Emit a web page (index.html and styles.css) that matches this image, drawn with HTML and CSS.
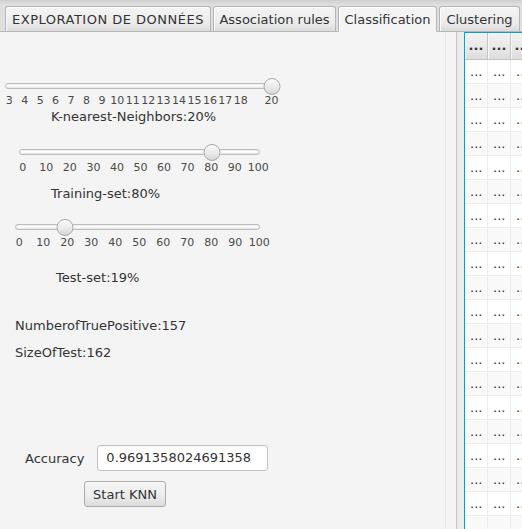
FILE: index.html
```html
<!DOCTYPE html>
<html>
<head>
<meta charset="utf-8">
<link rel="stylesheet" href="styles.css">
</head>
<body>
<div class="app">
  <div class="tabbar">
    <div class="tab tab-explore">EXPLORATION DE DONNÉES</div>
    <div class="tab tab-assoc">Association rules</div>
    <div class="tab tab-class selected">Classification</div>
    <div class="tab tab-clust">Clustering</div>
  </div>
  <div class="main">
    <div class="left">
      <div class="slider s1">
        <div class="track"></div>
        <div class="thumb" style="left:266.6px"></div>
        <div class="ticks">
          <span style="left:4.3px">3</span>
          <span style="left:19.7px">4</span>
          <span style="left:35.2px">5</span>
          <span style="left:50.6px">6</span>
          <span style="left:66px">7</span>
          <span style="left:81.5px">8</span>
          <span style="left:96.9px">9</span>
          <span style="left:112.3px">10</span>
          <span style="left:127.7px">11</span>
          <span style="left:143.2px">12</span>
          <span style="left:158.6px">13</span>
          <span style="left:174px">14</span>
          <span style="left:189.5px">15</span>
          <span style="left:204.9px">16</span>
          <span style="left:220.3px">17</span>
          <span style="left:235.7px">18</span>
          <span style="left:266.6px">20</span>
        </div>
      </div>
      <div class="caption c1">K-nearest-Neighbors:20%</div>

      <div class="slider s2">
        <div class="track"></div>
        <div class="thumb" style="left:193px"></div>
        <div class="ticks">
          <span style="left:3.7px">0</span>
          <span style="left:27.3px">10</span>
          <span style="left:50.8px">20</span>
          <span style="left:74.4px">30</span>
          <span style="left:97.9px">40</span>
          <span style="left:121.5px">50</span>
          <span style="left:145.1px">60</span>
          <span style="left:168.6px">70</span>
          <span style="left:192.2px">80</span>
          <span style="left:215.7px">90</span>
          <span style="left:239.3px">100</span>
        </div>
      </div>
      <div class="caption c2">Training-set:80%</div>

      <div class="slider s3">
        <div class="track"></div>
        <div class="thumb" style="left:49.9px"></div>
        <div class="ticks">
          <span style="left:4.3px">0</span>
          <span style="left:28.3px">10</span>
          <span style="left:52.3px">20</span>
          <span style="left:76.3px">30</span>
          <span style="left:100.3px">40</span>
          <span style="left:124.3px">50</span>
          <span style="left:148.3px">60</span>
          <span style="left:172.3px">70</span>
          <span style="left:196.3px">80</span>
          <span style="left:220.3px">90</span>
          <span style="left:244.3px">100</span>
        </div>
      </div>
      <div class="caption c3">Test-set:19%</div>

      <div class="caption c4">NumberofTruePositive:157</div>
      <div class="caption c5">SizeOfTest:162</div>

      <div class="acc-row">
        <span class="acc-label">Accuracy</span>
        <div class="field">0.9691358024691358</div>
      </div>
      <button class="btn">Start KNN</button>
    </div>
    <div class="split"></div>
    <div class="scroll">
      <div class="table">
        <div class="thead">
          <div class="th">...</div><div class="th">...</div><div class="th">...</div><div class="th">...</div>
        </div>
        <div class="tr"><div class="td">...</div><div class="td">...</div><div class="td">...</div><div class="td">...</div></div>
        <div class="tr"><div class="td">...</div><div class="td">...</div><div class="td">...</div><div class="td">...</div></div>
        <div class="tr"><div class="td">...</div><div class="td">...</div><div class="td">...</div><div class="td">...</div></div>
        <div class="tr"><div class="td">...</div><div class="td">...</div><div class="td">...</div><div class="td">...</div></div>
        <div class="tr"><div class="td">...</div><div class="td">...</div><div class="td">...</div><div class="td">...</div></div>
        <div class="tr"><div class="td">...</div><div class="td">...</div><div class="td">...</div><div class="td">...</div></div>
        <div class="tr"><div class="td">...</div><div class="td">...</div><div class="td">...</div><div class="td">...</div></div>
        <div class="tr"><div class="td">...</div><div class="td">...</div><div class="td">...</div><div class="td">...</div></div>
        <div class="tr"><div class="td">...</div><div class="td">...</div><div class="td">...</div><div class="td">...</div></div>
        <div class="tr"><div class="td">...</div><div class="td">...</div><div class="td">...</div><div class="td">...</div></div>
        <div class="tr"><div class="td">...</div><div class="td">...</div><div class="td">...</div><div class="td">...</div></div>
        <div class="tr"><div class="td">...</div><div class="td">...</div><div class="td">...</div><div class="td">...</div></div>
        <div class="tr"><div class="td">...</div><div class="td">...</div><div class="td">...</div><div class="td">...</div></div>
        <div class="tr"><div class="td">...</div><div class="td">...</div><div class="td">...</div><div class="td">...</div></div>
        <div class="tr"><div class="td">...</div><div class="td">...</div><div class="td">...</div><div class="td">...</div></div>
        <div class="tr"><div class="td">...</div><div class="td">...</div><div class="td">...</div><div class="td">...</div></div>
        <div class="tr"><div class="td">...</div><div class="td">...</div><div class="td">...</div><div class="td">...</div></div>
        <div class="tr"><div class="td">...</div><div class="td">...</div><div class="td">...</div><div class="td">...</div></div>
        <div class="tr"><div class="td">...</div><div class="td">...</div><div class="td">...</div><div class="td">...</div></div>
        <div class="tr"><div class="td">...</div><div class="td">...</div><div class="td">...</div><div class="td">...</div></div>
      </div>
    </div>
  </div>
</div>
</body>
</html>
```

FILE: styles.css
```css
* { box-sizing: border-box; }
html, body { margin: 0; padding: 0; }
body {
  width: 522px;
  height: 529px;
  overflow: hidden;
  background: #f4f4f4;
  font-family: "DejaVu Sans", sans-serif;
  font-size: 13px;
  color: #333333;
}
.app { width: 522px; height: 529px; display: flex; flex-direction: column; overflow: hidden; }

.tabbar {
  height: 32px;
  flex: none;
  display: flex;
  align-items: flex-end;
  gap: 2px;
  padding-left: 5px;
  background: linear-gradient(to bottom, #cfcfcf 0px, #dfdfdf 5px, #dfdfdf 100%);
  border-bottom: 1px solid #b8b8b8;
  white-space: nowrap;
}
.tab {
  height: 26px;
  flex: none;
  margin-bottom: -1px;
  padding: 0;
  line-height: 25px;
  text-align: center;
  overflow: hidden;
  border: 1px solid #b5b5b5;
  border-radius: 3px 3px 0 0;
  background: linear-gradient(to bottom, #f4f4f4, #ebebeb 70%, #dadada);
  box-shadow: inset 1px 1px 0 #fbfbfb;
  border-bottom: 1px solid #b8b8b8;
}
.tab-explore { width: 206px; letter-spacing: 0.5px; }
.tab-assoc { width: 123px; }
.tab-class { width: 99px; }
.tab-clust { width: 81px; }
.tab.selected {
  background: #f4f4f4;
  border-bottom-color: #f4f4f4;
  box-shadow: inset 1px 1px 0 #ffffff;
}

.main { flex: 1; display: flex; min-height: 0; }
.left {
  width: 446px;
  flex: none;
  display: flex;
  flex-direction: column;
  align-items: flex-start;
  border-right: 1px solid #e6e6e6;
}
.split { width: 10px; flex: none; }
.scroll {
  flex: 1;
  border-left: 1px solid #c6c6c6;
  padding-left: 7px;
  background: #ececec;
  overflow: hidden;
  min-width: 0;
}

.slider { position: relative; height: 30px; flex: none; }
.s1 { margin: 46px 0 0 5px; width: 274px; height: 29px; }
.s2 { margin: 19px 0 0 19px; width: 241px; }
.s3 { margin: 17px 0 0 15px; width: 245px; }
.track {
  margin-top: 5px;
  height: 6px;
  border: 1px solid #bdbdbd;
  border-radius: 3px;
  background: linear-gradient(to bottom, #e9e9e9, #ffffff 40%, #f3f3f3 70%, #e2e2e2);
}
.thumb {
  position: absolute;
  top: 0;
  width: 17px;
  height: 17px;
  transform: translateX(-50%);
  border-radius: 50%;
  border: 1px solid #a6a6a6;
  background: linear-gradient(to bottom, #fafafa, #e8e8e8 60%, #d6d6d6);
  box-shadow: inset 0 1px 0 #ffffff, 0 1px 0 rgba(255,255,255,0.7);
}
.ticks {
  position: relative;
  height: 13px;
  margin-top: 6px;
  font-size: 11px;
  line-height: 13px;
  color: #4a4a4a;
}
.s1 .ticks { margin-top: 5px; }
.ticks span { position: absolute; top: 0; transform: translateX(-50%); white-space: nowrap; }

.caption { line-height: 16px; height: 16px; white-space: nowrap; flex: none; }
.c1 { margin: 2px 0 0 51px; }
.c2 { margin: 12px 0 0 51px; }
.c3 { margin: 21px 0 0 56px; }
.c4 { margin: 32px 0 0 15px; }
.c5 { margin: 11px 0 0 15px; }

.acc-row {
  margin: 84px 0 0 25px;
  display: flex;
  align-items: center;
  gap: 13px;
  height: 26px;
  flex: none;
}
.field {
  width: 171px;
  height: 26px;
  line-height: 24px;
  padding-left: 8px;
  background: #ffffff;
  border: 1px solid #c2c2c2;
  border-radius: 3px;
  box-shadow: inset 0 1px 1px rgba(0,0,0,0.04);
  white-space: nowrap;
}
.btn {
  margin: 10px 0 0 84px;
  width: 82px;
  height: 26px;
  padding: 0;
  font-family: "DejaVu Sans", sans-serif;
  font-size: 13px;
  color: #333333;
  border: 1px solid #ababab;
  border-radius: 3px;
  background: linear-gradient(to bottom, #f6f6f6, #ececec 60%, #dcdcdc);
  box-shadow: inset 0 1px 0 #fcfcfc;
  flex: none;
}

.table {
  border-left: 1px solid #039ed3;
  border-top: 1px solid #039ed3;
  box-shadow: inset 1px 1px 0 #9fd6ee;
  background: #ffffff;
  width: 120px;
  height: 100%;
  overflow: hidden;
}
.thead { display: flex; height: 27px; }
.th {
  width: 23px;
  height: 27px;
  flex: none;
  border-right: 1px solid #c4c4c4;
  border-bottom: 1px solid #c4c4c4;
  background: linear-gradient(to bottom, #f2f2f2, #e6e6e6 70%, #dcdcdc);
  box-shadow: inset 1px 1px 0 #f8f8f8;
  font-weight: bold;
  line-height: 26px;
  text-align: center;
  overflow: hidden;
  white-space: nowrap;
}
.tr { display: flex; height: 24px; background: #ffffff; border-bottom: 1px solid #ededed; }
.tr:nth-child(odd) { background: #f9f9f9; }
.td {
  width: 23px;
  flex: none;
  border-right: 1px solid #ededed;
  line-height: 23px;
  padding-left: 5px;
  overflow: hidden;
  white-space: nowrap;
}
```
